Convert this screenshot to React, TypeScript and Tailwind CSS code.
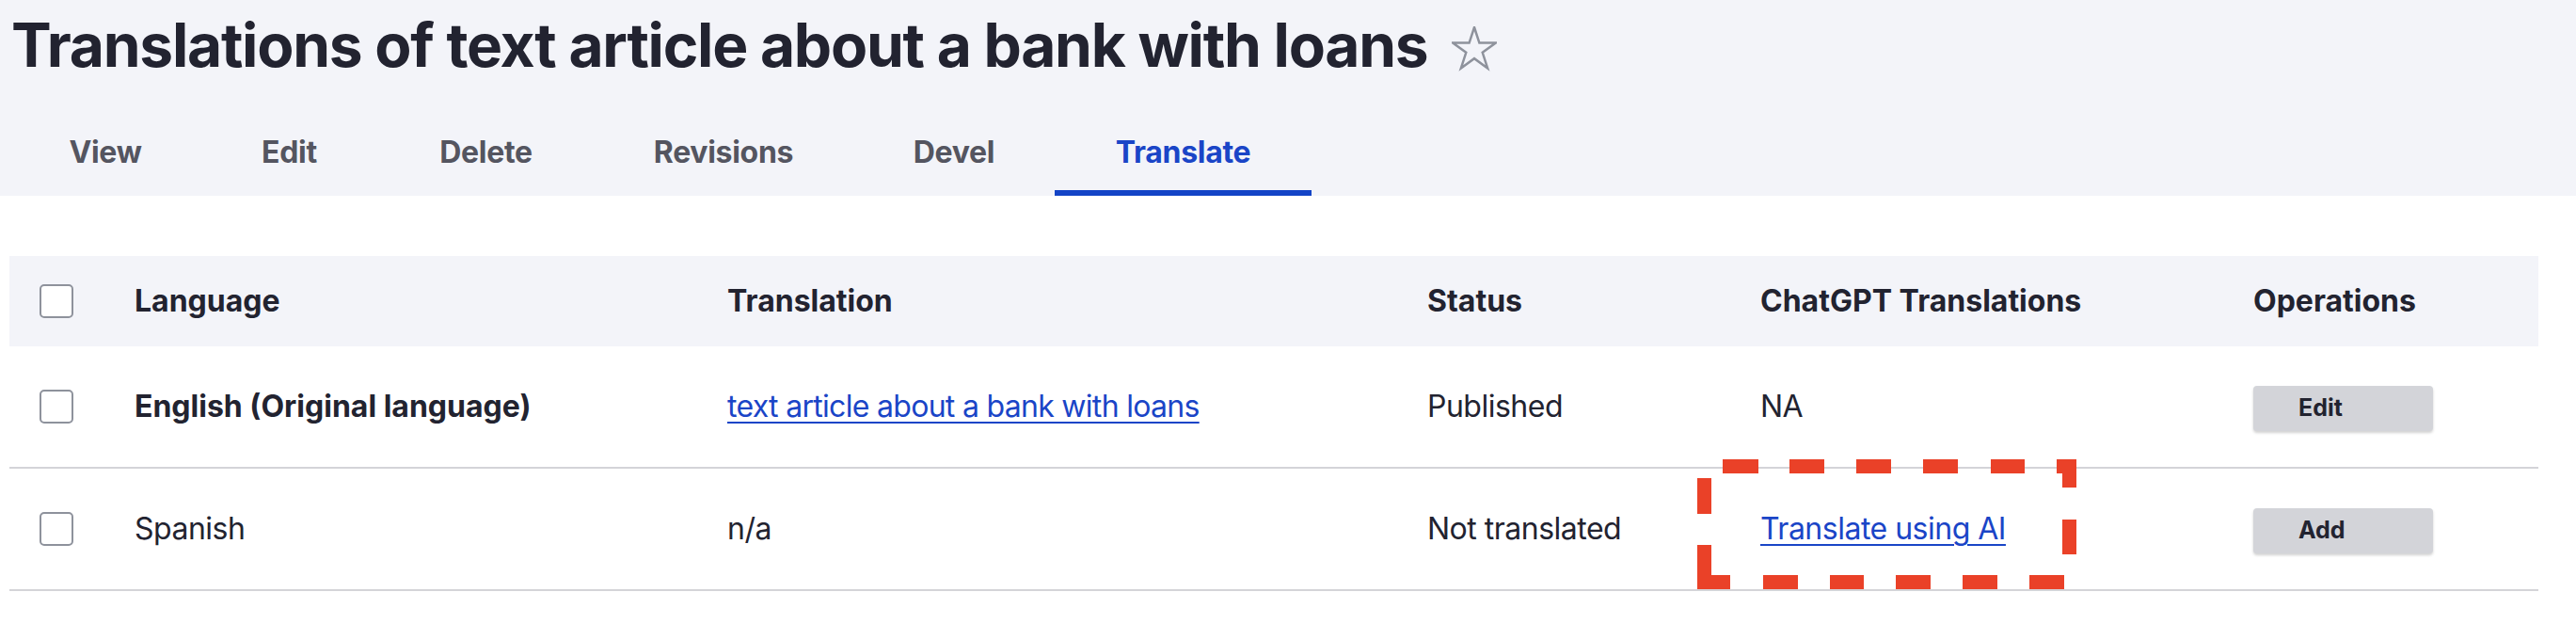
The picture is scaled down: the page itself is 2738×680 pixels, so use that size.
import React from "react";

const tabs = [
  { label: "View", w: "w-[202px]", active: false },
  { label: "Edit", w: "w-[189px]", active: false },
  { label: "Delete", w: "w-[229px]", active: false },
  { label: "Revisions", w: "w-[276px]", active: false },
  { label: "Devel", w: "w-[214px]", active: false },
  { label: "Translate", w: "w-[273px]", active: true },
];

function Checkbox() {
  return <div className="w-[36px] h-[36px] border-2 border-[#8e929c] rounded-[5px] bg-white" />;
}

function Btn({ children }: { children: React.ReactNode }) {
  return (
    <div className="w-[191px] h-[48px] mt-[4px] flex items-center pl-[48px] bg-[#d3d4d9] rounded-[4px] shadow-[0_2px_3px_rgba(0,0,0,0.18)] text-[25px] font-bold text-[#222330]">
      {children}
    </div>
  );
}

const grid = "grid grid-cols-[101px_630px_744px_354px_524px_335px] items-center";

export default function App() {
  return (
    <div className="relative min-h-[680px] bg-white font-['Inter',sans-serif] text-[#222330]">
      <div className="bg-[#f3f4f9] pl-[12px]">
        <div className="flex items-center pt-[16px]">
          <h1 className="text-[64px] leading-[64px] font-bold tracking-[-1.25px] text-[#222330]">
            Translations of text article about a bank with loans
          </h1>
          <svg width="48" height="48" viewBox="0 0 48 48" className="ml-[26px] mt-[8px]">
            <polygon
              points="24,1 29.39,17.58 46.83,17.58 32.72,27.83 38.11,44.42 24,34.17 9.89,44.42 15.28,27.83 1.17,17.58 18.61,17.58"
              fill="none"
              stroke="#8e929c"
              strokeWidth="2.5"
            />
          </svg>
        </div>
        <div className="flex mt-[32px] -ml-[1px]">
          {tabs.map((t) => (
            <div
              key={t.label}
              className={`${t.w} h-[96px] flex items-center justify-center text-[32px] leading-[32px] font-bold tracking-[-0.3px] border-b-[6px] ${
                t.active ? "text-[#1a45c7] border-[#1344c6]" : "text-[#545560] border-transparent"
              }`}
            >
              <span className="mt-[9px]">{t.label}</span>
            </div>
          ))}
        </div>
      </div>

      <div className="pl-[10px] pt-[64px] w-[2698px]">
        <div className={`${grid} h-[96px] bg-[#f3f4f9] text-[32px] font-bold`}>
          <div className="pl-[32px]"><Checkbox /></div>
          <div className="pl-[32px]">Language</div>
          <div className="pl-[32px]">Translation</div>
          <div className="pl-[32px]">Status</div>
          <div className="pl-[32px]">ChatGPT Translations</div>
          <div className="pl-[32px]">Operations</div>
        </div>
        <div className={`${grid} h-[130px] border-b-2 border-[#d4d4d8] text-[32px] tracking-[-0.5px]`}>
          <div className="pl-[32px]"><Checkbox /></div>
          <div className="pl-[32px] font-bold tracking-normal">English (Original language)</div>
          <div className="pl-[32px]">
            <a className="text-[#1a45c7] underline decoration-2 underline-offset-[5px] tracking-[-0.7px]">text article about a bank with loans</a>
          </div>
          <div className="pl-[32px]">Published</div>
          <div className="pl-[32px]">NA</div>
          <div className="pl-[32px] tracking-normal"><Btn>Edit</Btn></div>
        </div>
        <div className={`${grid} h-[130px] border-b-2 border-[#d4d4d8] text-[32px] tracking-[-0.5px]`}>
          <div className="pl-[32px]"><Checkbox /></div>
          <div className="pl-[32px]">Spanish</div>
          <div className="pl-[32px]">n/a</div>
          <div className="pl-[32px]">Not translated</div>
          <div className="pl-[32px]">
            <a className="text-[#1a45c7] underline decoration-2 underline-offset-[5px]">Translate using AI</a>
          </div>
          <div className="pl-[32px] tracking-normal"><Btn>Add</Btn></div>
        </div>
      </div>

      <svg
        className="absolute left-[1804px] top-[488px]"
        width="403"
        height="138"
        viewBox="0 0 403 138"
      >
        <g fill="#ea4128">
          <rect x="27" y="0" width="38" height="15" />
          <rect x="98" y="0" width="37" height="15" />
          <rect x="169" y="0" width="37" height="15" />
          <rect x="240" y="0" width="37" height="15" />
          <rect x="312" y="0" width="36" height="15" />
          <rect x="382" y="0" width="21" height="15" />
          <rect x="388" y="0" width="15" height="30" />
          <rect x="388" y="64" width="15" height="37" />
          <rect x="0" y="20" width="15" height="38" />
          <rect x="0" y="91" width="15" height="47" />
          <rect x="0" y="123" width="35" height="15" />
          <rect x="70" y="123" width="37" height="15" />
          <rect x="141" y="123" width="36" height="15" />
          <rect x="211" y="123" width="37" height="15" />
          <rect x="282" y="123" width="37" height="15" />
          <rect x="353" y="123" width="37" height="15" />
        </g>
      </svg>
    </div>
  );
}
